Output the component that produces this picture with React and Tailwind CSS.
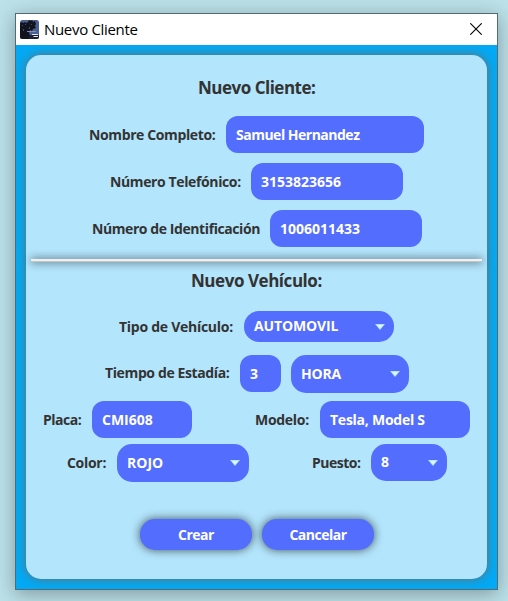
const FONT = "font-['Open_Sans','Noto_Sans',sans-serif]";

function Label({ className, children }) {
  return (
    <label className={`mr-[10px] shrink-0 whitespace-nowrap text-[14px] leading-5 font-bold text-[#333] ${className}`}>
      {children}
    </label>
  );
}

function Field({ className, children }) {
  return (
    <div className={`flex h-[37px] shrink-0 items-center rounded-[12px] bg-[#536dfe] pl-[10px] text-[14px] font-bold whitespace-nowrap text-white ${className}`}>
      {children}
    </div>
  );
}

function Select({ className, children }) {
  return (
    <div className={`flex shrink-0 items-center justify-between rounded-[15px] bg-[#536dfe] pr-[9px] pl-[10px] text-[14px] leading-5 font-bold whitespace-nowrap text-white ${className}`}>
      <span className="-mt-px">{children}</span>
      <svg width="10" height="6" viewBox="0 0 10 6">
        <path d="M0 0h10L5 6z" fill="#b3e5fc" />
        <path d="M2 1h6L5 4.5z" fill="#e1f5fe" />
      </svg>
    </div>
  );
}

function ActionButton({ children }) {
  return (
    <button className="h-[31px] w-[112px] rounded-[15px] bg-[#536dfe] pb-px text-[14px] font-bold tracking-[-0.5px] text-white shadow-[0_0_10px_rgba(0,0,0,0.65)]">
      {children}
    </button>
  );
}

function AppIcon() {
  return (
    <svg width="19" height="19" viewBox="0 0 19 19" className="-mt-px">
      <defs>
        <clipPath id="icon-frame"><rect width="19" height="19" rx="2.5" /></clipPath>
      </defs>
      <g clipPath="url(#icon-frame)">
        <rect width="19" height="19" fill="#4c5f91" />
        <path d="M0 3l2-1 1 1 2-1 1 1 2-1 1-2 2 1 1-1 1 2 2-1 1 3-1 2 1 2-3 1-1 2-2-1-1 3 1 2 5 1v4H0z" fill="#11131e" />
        <path d="M2 5h1v1H2zM5 4h1v1H5zM11 4h1v1h-1zM9 7h1v2H9zM3 9h1v2H3z" fill="#3c4b75" />
        <path d="M7 11h9v1H7z" fill="#8490b3" />
        <path d="M9 15h10v4H9z" fill="#1b2033" />
        <path d="M12 14h6v1h-6zM13 16h5v1h-4z" fill="#e7e4e7" />
      </g>
    </svg>
  );
}

export default function App() {
  return (
    <div className={`h-[601px] w-[508px] overflow-hidden bg-[#bce1e9] pt-[13px] pl-[15px] ${FONT}`}>
      <div className="flex h-[577px] w-[483px] flex-col border border-[#526b75] bg-[#03a9f4] shadow-[0_4px_18px_rgba(0,0,0,0.32)]">
        <header className="flex h-[31px] shrink-0 items-center justify-between bg-white pr-[15px] pl-1">
          <div className="flex items-center gap-[5px]">
            <AppIcon />
            <h1 className="-mt-[2px] text-[15px] leading-5 tracking-[-0.32px] text-black">Nuevo Cliente</h1>
          </div>
          <svg width="12" height="12" viewBox="0 0 12 12" stroke="#000" strokeWidth="1.1" className="-mt-px">
            <path d="M.3.3l11.4 11.4M11.7.3L.3 11.7" />
          </svg>
        </header>

        <main className="mt-[10px] ml-[10px] h-[524px] w-[461px] rounded-[15px] bg-[#b3e5fc] pt-[22px] shadow-[0_0_10px_rgba(110,105,100,0.95)]">
          <h2 className="ml-[172px] h-[39px] text-[17px] leading-[22px] font-bold tracking-[-0.5px] text-[#333]">Nuevo Cliente:</h2>
          <div className="mb-[10px] flex items-center pl-[63px]">
            <Label className="w-[127px] tracking-[-0.38px]">Nombre Completo:</Label>
            <Field className="w-[198px] tracking-[-0.5px]">Samuel Hernandez</Field>
          </div>
          <div className="mb-[10px] flex items-center pl-[84px]">
            <Label className="w-[131px] tracking-[-0.38px]">Número Telefónico:</Label>
            <Field className="w-[152px]">3153823656</Field>
          </div>
          <div className="flex items-center pl-[66px]">
            <Label className="w-[168px] tracking-[-0.42px]">Número de Identificación</Label>
            <Field className="w-[152px]">1006011433</Field>
          </div>

          <div className="mt-[12px] ml-[5px] h-[3px] w-[451px] border-b border-[#c4c4c4] bg-[#f0f0f0] shadow-[0_0_8px_rgba(0,0,0,0.85)]" />

          <h2 className="mt-[8px] ml-[165px] h-[41px] text-[17px] leading-[22px] font-bold tracking-[-0.45px] text-[#333]">Nuevo Vehículo:</h2>
          <div className="mb-[13px] flex items-center pl-[93px]">
            <Label className="w-[115px] tracking-[-0.27px]">Tipo de Vehículo:</Label>
            <Select className="h-[31px] w-[150px] tracking-[-0.12px]">AUTOMOVIL</Select>
          </div>
          <div className="mb-2 flex h-[38px] items-start pl-[79px]">
            <Label className="mt-[8px] w-[125px] tracking-[-0.38px]">Tiempo de Estadía:</Label>
            <Field className="mr-[10px] w-[41px]">3</Field>
            <Select className="h-[38px] w-[118px] tracking-[-0.2px]">HORA</Select>
          </div>
          <div className="mb-[6px] flex items-center pl-[17px]">
            <Label className="w-[39px] tracking-[-0.5px]">Placa:</Label>
            <Field className="w-[100px]">CMI608</Field>
            <Label className="ml-[63px] w-[55px] tracking-[-0.3px]">Modelo:</Label>
            <Field className="w-[150px] tracking-[-0.25px]">Tesla, Model S</Field>
          </div>
          <div className="flex h-[38px] items-start pl-[41px]">
            <Label className="mt-[9px] w-[40px] tracking-[-0.3px]">Color:</Label>
            <Select className="h-[38px] w-[132px]">ROJO</Select>
            <Label className="mt-[9px] ml-[63px] w-[49px] tracking-[-0.5px]">Puesto:</Label>
            <Select className="h-[37px] w-[76px]">8</Select>
          </div>

          <div className="mt-[37px] ml-[114px] flex gap-[10px]">
            <ActionButton>Crear</ActionButton>
            <ActionButton>Cancelar</ActionButton>
          </div>
        </main>
      </div>
    </div>
  );
}
